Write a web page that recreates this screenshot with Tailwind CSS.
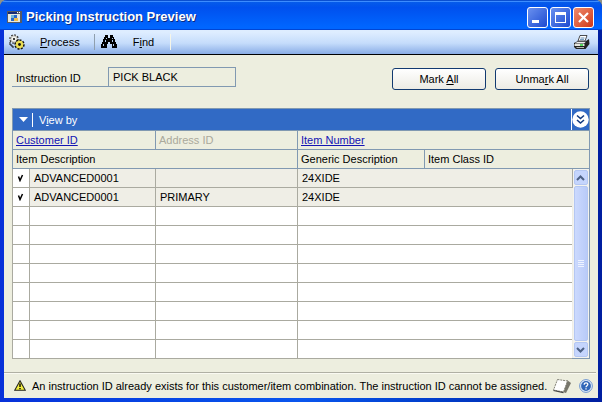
<!DOCTYPE html>
<html lang="en">
<head>
<meta charset="utf-8">
<title>Picking Instruction Preview</title>
<script src="https://cdn.jsdelivr.net/npm/@tailwindcss/browser@4"></script>
</head>
<body class="bg-[#8f9186] font-['Liberation_Sans',sans-serif] text-[11px] leading-[14px] text-black">
<div class="flex min-h-screen flex-col overflow-hidden rounded-t-[7px] bg-linear-to-r from-[#0831d9] via-[#0a56ee] to-[#001ea0]">
  <header class="flex h-[30px] items-center gap-1 bg-linear-to-b from-[#0a5fe8] from-0% via-[#0050ee] via-25% to-[#0066ff] to-90% pr-2 pl-[7px] pt-1 shadow-[inset_0_1px_0_#0a4fd0,inset_0_2px_0_#3c8cff,inset_0_-1px_0_#0046d5]">
    <svg class="h-3 w-[15px]" viewBox="0 0 15 12" shape-rendering="crispEdges" aria-hidden="true">
      <rect width="15" height="12" fill="#555b66"/><rect x="1" y="3" width="12" height="8" fill="#e6e8e0"/><rect x="1" y="1" width="9" height="2" fill="#172c75"/><rect x="10" y="1" width="1" height="1" fill="#fff"/><rect x="12" y="1" width="1" height="1" fill="#fff"/>
      <rect x="4" y="4" width="3" height="3" fill="#6fb7d8"/><rect x="7" y="4" width="3" height="3" fill="#2968c8"/><rect x="4" y="7" width="3" height="3" fill="#2968c8"/><rect x="7" y="7" width="4" height="3" fill="#f1bd48"/>
    </svg>
    <h1 class="flex-1 text-[13px] leading-4 font-bold text-white [text-shadow:1px_1px_0_#0a2a80]">Picking Instruction Preview</h1>
    <div class="flex gap-[2px]">
      <button aria-label="Minimize" class="h-[21px] w-[21px] rounded-[3px] border border-white bg-linear-to-br from-[#6a90ef] to-[#1e48d0]"><svg viewBox="0 0 19 19" class="block" aria-hidden="true"><path d="M4 12h7v3H4z" fill="#fff"/></svg></button>
      <button aria-label="Maximize" class="h-[21px] w-[21px] rounded-[3px] border border-white bg-linear-to-br from-[#6a90ef] to-[#1e48d0]"><svg viewBox="0 0 19 19" class="block" aria-hidden="true"><path fill-rule="evenodd" d="M4 4h11v11H4zM5 7v7h9V7z" fill="#fff"/></svg></button>
      <button aria-label="Close" class="h-[21px] w-[21px] rounded-[3px] border border-white bg-linear-to-br from-[#ee8a6c] to-[#cf3410]"><svg viewBox="0 0 19 19" class="block" aria-hidden="true"><path d="M5 5l9 9M14 5l-9 9" stroke="#fff" stroke-width="2.2"/></svg></button>
    </div>
  </header>

  <div class="mx-1 mb-1 flex flex-1 flex-col bg-[#edeedf]">
    <nav class="flex h-[25px] items-center border-b border-black bg-linear-to-b from-[#deedff] from-10% via-[#c5dcfb] via-55% to-[#8aade6] pr-2 pl-1">
      <button class="flex items-center gap-[15px]">
        <svg class="h-4 w-[17px]" viewBox="0 0 17 16" aria-hidden="true">
          <circle cx="6" cy="5" r="4" fill="#f4f4ec" stroke="#333" stroke-width="1.6" stroke-dasharray="1.6 1.5"/><circle cx="6" cy="5" r="3.2" fill="#f2f2ec" stroke="#999" stroke-width=".7"/><circle cx="6" cy="5" r="1.1" fill="#111"/>
          <circle cx="11.5" cy="10.5" r="4.2" fill="#e9dc55" stroke="#111" stroke-width="2" stroke-dasharray="2 1.2"/><circle cx="11.5" cy="10.5" r="3.7" fill="#eadd50"/><circle cx="11.5" cy="10.5" r="1.4" fill="#111"/><path d="M2 8v3h2v2h2" fill="none" stroke="#111"/>
        </svg>
        <span><u>P</u>rocess</span>
      </button>
      <span class="mx-[14px] h-4 w-px bg-[#8f9fae]"></span>
      <button class="-ml-2 flex items-center gap-4">
        <svg class="h-[14px] w-4" viewBox="0 0 16 14" shape-rendering="crispEdges" aria-hidden="true">
          <path d="M4 0h3v3h2V0h3v2h1v2h1v3h1v2h1v4h-5V9H9V7H7v2H6v4H0V9h1V7h1V4h1V2h1z" fill="#000"/><path d="M5 3h1v1H5zM4 5h1v2H4zM2 9h1v2H2zM11 3h1v1h-1zM11 5h1v2h-1zM12 9h1v2h-1z" fill="#b8d0f0"/>
        </svg>
        <span>F<u>i</u>nd</span>
      </button>
      <span class="ml-4 h-4 w-px bg-[#f5f5e8]"></span>
      <button aria-label="Print" class="ml-auto">
        <svg class="block h-[15px] w-[17px]" viewBox="0 0 17 15" aria-hidden="true">
          <path d="M5 6l2-5.500h7L12 6z" fill="#fff" stroke="#222" stroke-width=".8"/><path d="M7.500 3h4M7 4.700h4" stroke="#356b9c" stroke-width=".8"/>
          <path d="M1 8l4-2h8l3-2 .5 5-4 5H3l-2-2z" fill="#222"/><path d="M2 8l3-1.300h8L11 8.400H2z" fill="#eee"/><path d="M1.500 9h10v2h-10z" fill="#e5e6de"/><path d="M7 9.300h3v1.500H7z" fill="#25d333"/><path d="M3 12h8v1H4z" fill="#b5b8b1"/>
        </svg>
      </button>
    </nav>

    <main class="px-2">
      <div class="flex items-start pt-3">
        <div class="flex w-56 border-b border-[#8199b1]">
          <label for="instruction" class="w-24 pt-1 pl-1">Instruction ID</label>
          <input id="instruction" readonly value="PICK BLACK" class="h-[19px] w-32 border border-b-0 border-[#8199b1] bg-transparent px-1 outline-none">
        </div>
        <div class="mr-px ml-auto flex gap-[9px] pt-px">
          <button class="h-[22px] w-[94px] rounded-[3px] border border-[#123a70] bg-linear-to-b from-white to-[#ecebe4]">Mark <u>A</u>ll</button>
          <button class="h-[22px] w-[94px] rounded-[3px] border border-[#123a70] bg-linear-to-b from-white to-[#ecebe4]">Unma<u>r</u>k All</button>
        </div>
      </div>

      <section class="mt-[18px]">
        <div class="flex h-[22px] items-center border border-b-0 border-[#8199b1] bg-[#316ac5] text-white">
          <button class="flex items-center gap-1 pl-[6px]">
            <svg class="h-[5px] w-[9px]" viewBox="0 0 9 5" aria-hidden="true"><path d="M0 0h9L4.500 5z" fill="#fff"/></svg>
            <span class="h-[14px] w-px bg-white"></span>
            <span class="pl-[2px]">V<u>i</u>ew by</span>
          </button>
          <button aria-label="Expand rows" class="ml-auto flex h-full items-center border-l border-white">
            <svg class="h-[17px] w-[17px]" viewBox="0 0 17 17" aria-hidden="true"><circle cx="8.500" cy="8.500" r="8.200" fill="#fff"/><path d="M5 4.500l3.500 3 3.500-3M5 9l3.500 3L12 9" fill="none" stroke="#123a80" stroke-width="1.600"/></svg>
          </button>
        </div>
        <table class="w-full table-fixed border-collapse border border-[#8199b1] text-left [&_td]:border [&_td]:border-[#aaaaa0] [&_td]:p-0 [&_td]:pl-1 [&_th]:border [&_th]:border-[#8199b1] [&_th]:p-0 [&_th]:pl-[3px] [&_th]:font-normal [&_tr]:h-[19px]">
          <colgroup><col class="w-[17px]"><col class="w-[126px]"><col class="w-[142px]"><col class="w-[127px]"><col><col class="w-[17px]"></colgroup>
          <thead>
            <tr class="text-[#1414b4]"><th colspan="2"><a href="#" class="underline">Customer ID</a></th><th class="text-[#aaa99c]">Address ID</th><th colspan="3"><a href="#" class="underline">Item Number</a></th></tr>
            <tr><th colspan="3">Item Description</th><th>Generic Description</th><th colspan="2">Item Class ID</th></tr>
          </thead>
          <tbody class="bg-white">
            <tr class="bg-[#efeee6]">
              <td class="bg-white"><svg class="h-2 w-2" viewBox="0 0 8 8" role="img" aria-label="Marked"><path d="M1.500 2.500l1.500 4L5.500 1" fill="none" stroke="#000" stroke-width="1.500"/></svg></td>
              <td>ADVANCED0001</td><td></td><td colspan="2">24XIDE</td>
              <td rowspan="10" class="h-px bg-[#f4f3ee] !border-[#8199b1] !border-l-[#efeee6] !pl-0">
                <div class="flex h-full flex-col gap-px p-px">
                  <button aria-label="Scroll up" class="flex h-[15px] items-center justify-center rounded-[2px] border border-[#b4c7f2] bg-[#c5d5fd]"><svg class="h-[6px] w-[9px]" viewBox="0 0 9 6" aria-hidden="true"><path d="M1 5l3.500-3.500L8 5" fill="none" stroke="#4d6185" stroke-width="2"/></svg></button>
                  <div class="flex flex-1 items-center justify-center rounded-[2px] border border-[#b4c7f2] bg-linear-to-r from-[#cbd9fe] to-[#b9cbf8]"><svg class="h-[8px] w-[6px]" viewBox="0 0 6 8" shape-rendering="crispEdges" aria-hidden="true"><path d="M0 0h6v1H0zM0 2h6v1H0zM0 4h6v1H0zM0 6h6v1H0z" fill="#edf3ff"/></svg></div>
                  <button aria-label="Scroll down" class="flex h-[15px] items-center justify-center rounded-[2px] border border-[#b4c7f2] bg-[#c5d5fd]"><svg class="h-[6px] w-[9px]" viewBox="0 0 9 6" aria-hidden="true"><path d="M1 1l3.500 3.500L8 1" fill="none" stroke="#4d6185" stroke-width="2"/></svg></button>
                </div>
              </td>
            </tr>
            <tr class="bg-[#efeee6]">
              <td class="bg-white"><svg class="h-2 w-2" viewBox="0 0 8 8" role="img" aria-label="Marked"><path d="M1.500 2.500l1.500 4L5.500 1" fill="none" stroke="#000" stroke-width="1.500"/></svg></td>
              <td>ADVANCED0001</td><td>PRIMARY</td><td colspan="2">24XIDE</td>
            </tr>
            <tr><td></td><td></td><td></td><td colspan="2"></td></tr>
            <tr><td></td><td></td><td></td><td colspan="2"></td></tr>
            <tr><td></td><td></td><td></td><td colspan="2"></td></tr>
            <tr><td></td><td></td><td></td><td colspan="2"></td></tr>
            <tr><td></td><td></td><td></td><td colspan="2"></td></tr>
            <tr><td></td><td></td><td></td><td colspan="2"></td></tr>
            <tr><td></td><td></td><td></td><td colspan="2"></td></tr>
            <tr><td></td><td></td><td></td><td colspan="2"></td></tr>
          </tbody>
        </table>
      </section>
    </main>

    <footer class="mt-auto mr-[2px] flex h-[26px] items-center border-t border-[#b0b0a4] pl-[10px] shadow-[inset_0_1px_0_#fafaf2]">
      <svg class="mr-[6px] h-[11px] w-[12px]" viewBox="0 0 12 11" aria-hidden="true"><path d="M6 .8L11.300 10.300H.7z" fill="#f3ee3c" stroke="#222" stroke-width="1.100"/><path d="M6 3.500v3.500M6 8v1.300" stroke="#000" stroke-width="1.400"/></svg>
      <p class="flex-1">An instruction ID already exists for this customer/item combination. The instruction ID cannot be assigned.</p>
      <button aria-label="Note" class="mr-[7px]"><svg class="block h-4 w-5" viewBox="0 0 20 16" aria-hidden="true"><path d="M15 2l4 3-5 10-3-1z" fill="#77766b"/><path d="M5.500 1.500l10 1.500-4 11L1.500 12z" fill="#fff" stroke="#77766b" stroke-width=".9" stroke-dasharray="2 .8"/><path d="M1.500 12.500l10 2.200" stroke="#444" stroke-width="1.200"/></svg></button>
      <button aria-label="Help" class="mr-[3px]"><svg class="block h-[14px] w-[14px]" viewBox="0 0 14 14" aria-hidden="true"><circle cx="7" cy="7" r="6.400" fill="#e4eefb" stroke="#6f96cf"/><circle cx="7" cy="7" r="4.900" fill="#2f66b8"/><path d="M5.200 5.700c0-2.600 3.800-2.300 3.600-.2C8.700 6.800 7 6.700 7 8.300M7 9.300v1.300" fill="none" stroke="#fff" stroke-width="1.300"/></svg></button>
    </footer>
  </div>
</div>
</body>
</html>
